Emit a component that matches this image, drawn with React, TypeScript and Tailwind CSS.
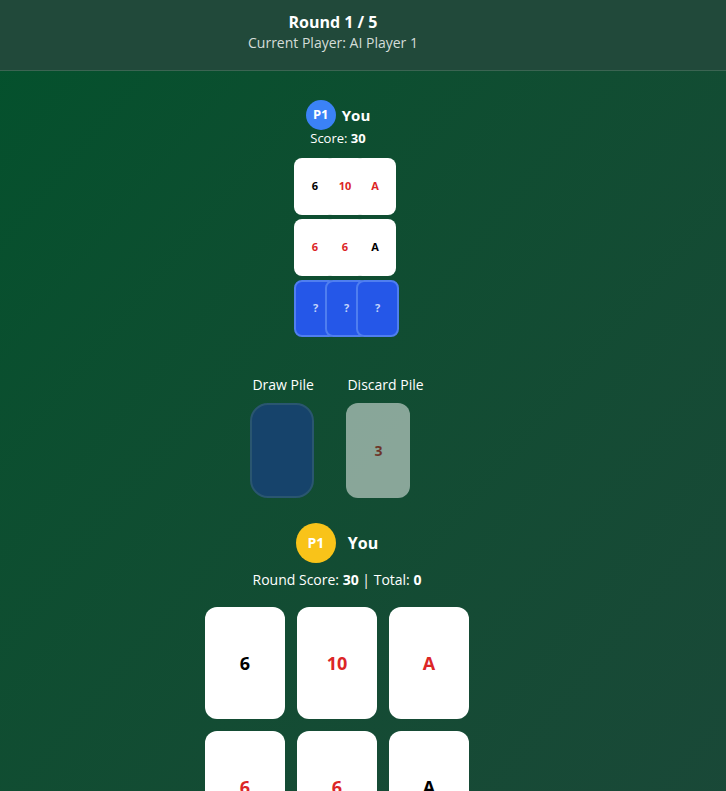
import React from "react";

type Card = { rank: string; red: boolean };

const grid: Card[][] = [
  [
    { rank: "6", red: false },
    { rank: "10", red: true },
    { rank: "A", red: true },
  ],
  [
    { rank: "6", red: true },
    { rank: "6", red: true },
    { rank: "A", red: false },
  ],
];

const MiniCard = ({ card, first }: { card: Card; first: boolean }) => (
  <div
    className={`w-[42px] h-[57px] rounded-lg bg-white flex items-center justify-center text-[11px] font-bold ${
      first ? "" : "-ml-3"
    } ${card.red ? "text-[#dc2626]" : "text-black"}`}
  >
    {card.rank}
  </div>
);

const HiddenMini = ({ first }: { first: boolean }) => (
  <div
    className={`w-[43px] h-[57px] rounded-lg bg-[#2557e8] border-2 border-[#4f7ef0] flex items-center justify-center text-[11px] font-bold text-[#c4d4fb] ${
      first ? "" : "-ml-3"
    }`}
  >
    ?
  </div>
);

const BigCard = ({ card }: { card: Card }) => (
  <div
    className={`w-20 h-28 rounded-xl bg-white flex items-center justify-center text-lg font-bold ${
      card.red ? "text-[#dc2626]" : "text-black"
    }`}
  >
    {card.rank}
  </div>
);

export default function App() {
  return (
    <div
      className="min-h-[791px] bg-gradient-to-br from-[#03512c] to-[#1a4838] text-white"
      style={{ fontFamily: '"Open Sans", "Noto Sans", sans-serif' }}
    >
      <header className="h-[71px] box-border border-b border-[#3b6452] bg-[#21493a] pt-[11px] pr-[60px] flex flex-col items-center">
        <div className="text-base font-bold leading-[22px]">Round 1 / 5</div>
        <div className="text-sm leading-5 text-[#d4dcd8]">Current Player: AI Player 1</div>
      </header>

      <main className="pr-[52px] pt-[29px] flex flex-col items-center">
        {/* opponent */}
        <div className="flex items-center gap-[6px] ml-[2px]">
          <div className="w-[30px] h-[30px] rounded-full bg-[#3b82f6] flex items-center justify-center text-[13px] font-bold">
            P1
          </div>
          <span className="text-[15px] font-bold">You</span>
        </div>
        <div className="text-[13px] leading-4 ml-[2px]">
          Score: <span className="font-bold">30</span>
        </div>
        <div className="mt-3 ml-[19px] flex flex-col gap-1">
          {grid.map((row, i) => (
            <div key={i} className="flex">
              {row.map((c, j) => (
                <MiniCard key={j} card={c} first={j === 0} />
              ))}
            </div>
          ))}
          <div className="flex">
            {[0, 1, 2].map((j) => (
              <HiddenMini key={j} first={j === 0} />
            ))}
          </div>
        </div>

        {/* piles */}
        <div className="mt-[38px] flex gap-8">
          <div className="flex flex-col items-start gap-2">
            <span className="text-sm leading-5 pl-[2px]">Draw Pile</span>
            <div className="w-16 h-[95px] rounded-[18px] bg-[#16436b] border-2 border-[#2a5670]" />
          </div>
          <div className="flex flex-col items-start gap-2">
            <span className="text-sm leading-5 pl-[1px]">Discard Pile</span>
            <div className="w-16 h-[95px] rounded-xl bg-white opacity-50 flex items-center justify-center text-sm font-bold text-[#c81e1e]">
              3
            </div>
          </div>
        </div>

        {/* me */}
        <div className="mt-[25px] flex items-center gap-3">
          <div className="w-10 h-10 rounded-full bg-[#f9c319] flex items-center justify-center text-sm font-bold">
            P1
          </div>
          <span className="text-base font-bold">You</span>
        </div>
        <div className="mt-[7px] text-sm leading-5">
          Round Score: <span className="font-bold">30</span> | Total: <span className="font-bold">0</span>
        </div>
        <div className="mt-[17px] grid grid-cols-3 gap-3 pb-6">
          {grid.flat().map((c, i) => (
            <BigCard key={i} card={c} />
          ))}
        </div>
      </main>
    </div>
  );
}
